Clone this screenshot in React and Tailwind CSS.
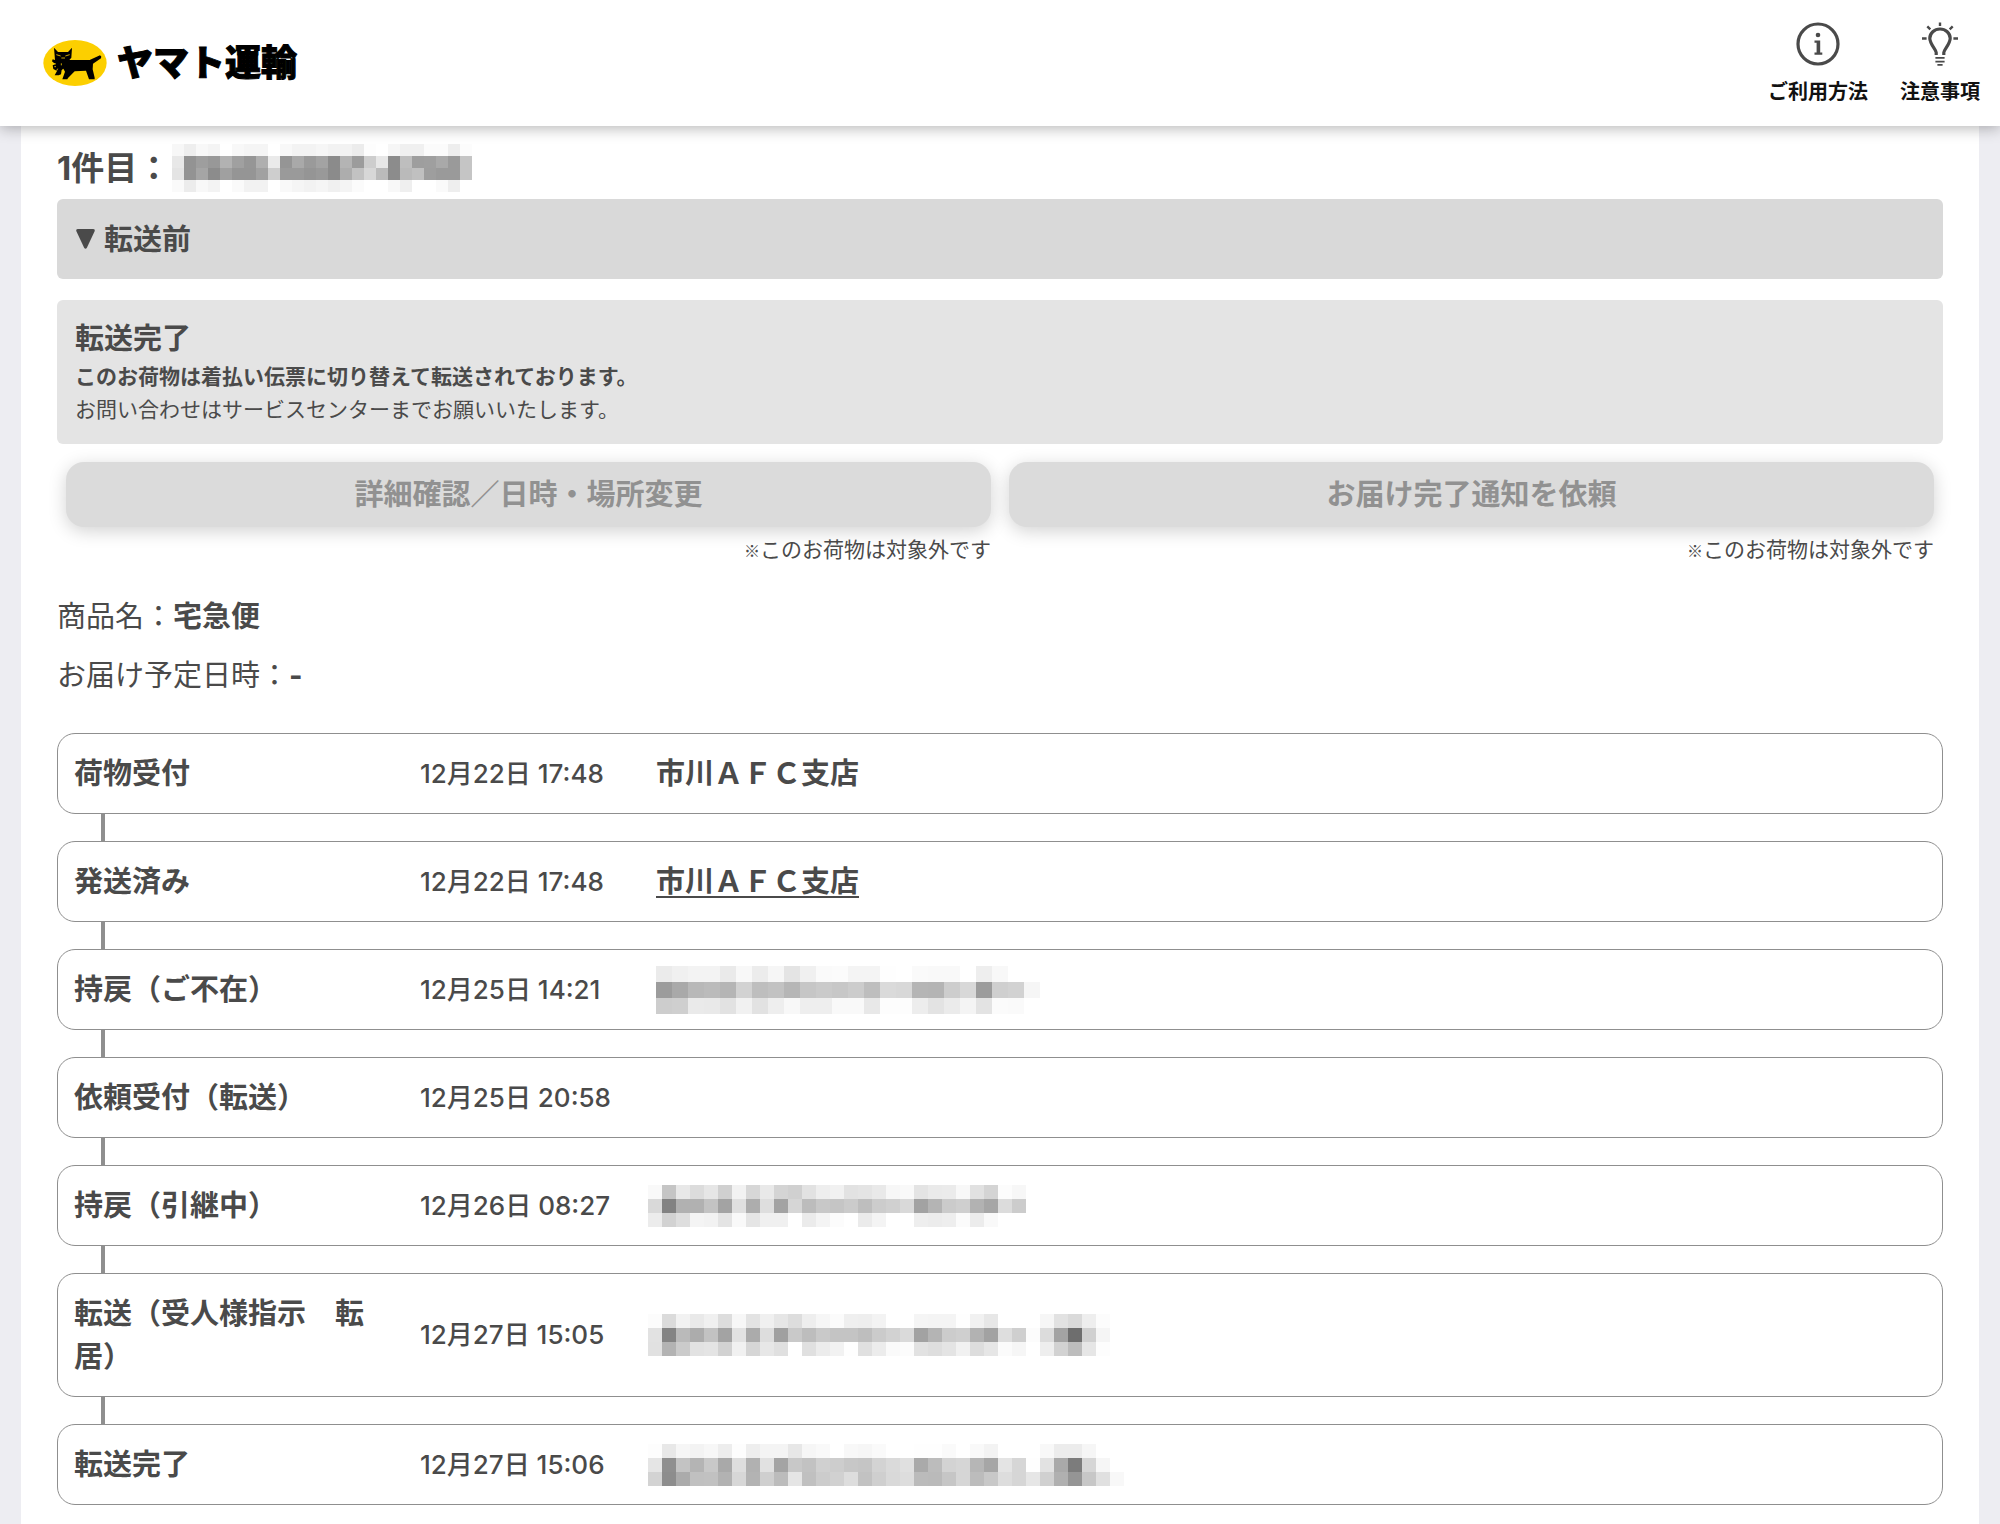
const navLinks = [
  { href: '#howto', label: 'ご利用方法', Icon: InfoIcon },
  { href: '#notes', label: '注意事項', Icon: BulbIcon },
]

const actions = ['詳細確認／日時・場所変更', 'お届け完了通知を依頼']

// Masked values: one string per row of blocks, two hex digits of grey per block
const slipMask = [
  'f7eef8f4fff8f5f5fff8f3f3f6f2f2ecfdfff6f0f0fbfbeefc',
  'e8939e98b2a096afea95a99aa38bb49ccde78cbe9e9fa99ac5',
  'e493a58ca09595a1ce9a9a95998badc2d7bb8cbac09e9a9ac5',
  'faecf8f3fffaf2f2fff9f5f2f5f0f4fbfffff8effffffaeeff',
]

const events = [
  { status: '荷物受付', date: '12月22日 17:48', place: '市川ＡＦＣ支店' },
  { status: '発送済み', date: '12月22日 17:48', place: '市川ＡＦＣ支店', href: '#office' },
  {
    status: '持戻（ご不在）',
    date: '12月25日 14:21',
    block: 16,
    indent: true,
    mask: [
      'ebf0f3f3eaf8ecf6e4f0fafbf4f4fefffaf9f9ffeef8ffff',
      '9ca9b8bbb5d2bec2b6c6cac7ccbedad8b5b4cdd89ccfd2f6',
      'cdcfeae9e2f1e2eef8eeeef9f9e8fdfdede3ebf4e3fbfaff',
    ],
  },
  { status: '依頼受付（転送）', date: '12月25日 20:58' },
  {
    status: '持戻（引継中）',
    date: '12月26日 08:27',
    block: 14,
    mask: [
      'f9c5e8dce6d0f2d7e9d4d0e2eef1e2e4e9f7f9e4eaebf8e1d4fcf7',
      'd982b1b1c3a3e0addea3d6bcc8c5cbbeccd0d9a2b4cbcfb2a6dccc',
      'ecd2def4f2e4f9e5f0f0ffebf4fcffebf4ffffeeeceefbecf9ffff',
    ],
  },
  {
    status: '転送（受人様指示　転居）',
    date: '12月27日 15:05',
    block: 14,
    mask: [
      'fcdbf2e9f0ddf7e3f0e6ddeef6fbefeef3fffff5f4f4fef1e7fffffff6e2daeefc',
      'e284baacc2a3e2abdda0c9bdc9c4c4becbd2daa2b4cccfb2a2decffcdca36ed0f5',
      'e1b3cbe2e4d2f1d6e7e0ffe0ecf2fee0ecfafce2dee4f1dde6fbf6ffeed2bde6fd',
    ],
  },
  {
    status: '転送完了',
    date: '12月27日 15:06',
    block: 14,
    mask: [
      'fde8f6f3f7edfdeef4f4e7f6f9fff8f6fafffffefefafff9f3fffffff8ececf6ffff',
      'e58fc3b4c8a9deb1e1a4c8c2d0cdc7c5d3dae0aabcd3d6b6a6e4d6fee2a97cd6f6ff',
      'd38dabc0c1b2d7b3cfbce5c0ccd1ddc2cfd9ddbbbac6d6bcc8ddd6e6d0b095c7e0f8',
    ],
  },
]

function InfoIcon() {
  return (
    <svg width="44" height="44" viewBox="0 0 44 44" fill="none" aria-hidden="true">
      <circle cx="22" cy="22" r="20" stroke="#4a4a4a" strokeWidth="3.2" />
      <circle cx="22" cy="13" r="2.3" fill="#4a4a4a" />
      <path d="M18.5 18.5h5.7v12h2.1v2.2h-7.8v-2.2h2.1v-9.8h-2.1z" fill="#4a4a4a" />
    </svg>
  )
}

function BulbIcon() {
  return (
    <svg width="44" height="44" viewBox="0 0 44 44" fill="none" stroke="#4a4a4a" aria-hidden="true">
      <path
        d="M18.2 33v-2.6c0-2.4-6.4-8.4-6.4-14.2a10.2 9.2 0 0 1 20.4 0c0 5.8-6.4 11.8-6.4 14.2V33"
        strokeWidth="3.2"
      />
      <path d="M22 .5v3.4M9.3 4.3l3 3M34.7 4.3l-3 3M4 16.5h4.6M35.4 16.5H40" strokeWidth="2.4" />
      <path d="M17.4 35.8h9.2M17.4 39.6h9.2M19.4 42.9h5.2" strokeWidth="1.8" />
    </svg>
  )
}

function CatMark() {
  return (
    <svg width="64" height="46" viewBox="131 117 192 138" aria-hidden="true">
      <ellipse cx="227" cy="186" rx="95" ry="69" fill="#fccf00" />
      <path
        d="M164 140L176 153H206L218 140L216 170L210 177H271L302 163Q308 166 305 172L281 188L280 205L286 230V235H269L260 209L226 211L206 231L204 235H189L197 212L192 203L187 207L185 220L178 223H166L173 210L162 204L160 193L168 190L158 181L160 175L167 177Z"
        fill="#000"
      />
      <path d="M171 161l13 4M211 161l-13 4M186 171h11M163 187l7 2M165 197h5M175 203l-3 6M186 187v6" stroke="#fccf00" strokeWidth="2.4" fill="none" />
    </svg>
  )
}

function Mask({ rows, block }) {
  const cols = rows[0].length / 2
  return (
    <svg
      className="block shrink-0"
      width={cols * block}
      height={rows.length * block}
      shapeRendering="crispEdges"
      aria-hidden="true"
    >
      {rows.map((row, y) =>
        row.match(/../g).map((v, x) => (
          <rect
            key={`${x}-${y}`}
            x={x * block}
            y={y * block}
            width={block}
            height={block}
            fill={`#${v}${v}${v}`}
          />
        ))
      )}
    </svg>
  )
}

function Header() {
  return (
    <header className="relative z-10 flex h-[126px] items-center justify-between bg-white pl-[43px] pr-5 shadow-[0_2px_14px_rgba(0,0,0,0.3)]">
      <a href="#top" className="flex items-center gap-2.5">
        <CatMark />
        <span className="text-[36px] leading-[44px] font-black text-black [-webkit-text-stroke:1px_#000]">ヤマト運輸</span>
      </a>
      <nav className="flex gap-8">
        {navLinks.map(({ href, label, Icon }) => (
          <a key={href} href={href} className="flex flex-col items-center gap-3.5 text-xl leading-6 font-bold text-[#111]">
            <Icon />
            {label}
          </a>
        ))}
      </nav>
    </header>
  )
}

function Event({ event }) {
  const { status, date, place, href, mask, block, indent } = event
  return (
    <li className="group">
      <div className="flex items-center rounded-[18px] border border-[#8f8f8f] px-4 py-[18px]">
        <p className="w-[300px] shrink-0 font-bold">{status}</p>
        <p className="ml-[46px] w-[228px] shrink-0 text-[26px] leading-8 font-medium">{date}</p>
        {place && (
          <p className="pl-2 font-bold">
            {href ? <a href={href} className="underline decoration-2 underline-offset-4">{place}</a> : place}
          </p>
        )}
        {mask && (
          <div className={`flex h-[43px] items-center ${indent ? 'pl-2' : ''}`}>
            <Mask rows={mask} block={block} />
          </div>
        )}
      </div>
      <div className="ml-11 h-[27px] w-1 bg-[#8f8f8f] group-last:hidden" />
    </li>
  )
}

export default function App() {
  return (
    <div className="flex min-h-screen flex-col bg-[#ededf2] font-[Inter,'Noto_Sans_CJK_JP',sans-serif] text-[#4a4a4a]">
      <Header />
      <main className="mx-[21px] grow bg-white px-9 pt-[18px] pb-[18px] text-[29px] leading-[43px]">
        <div className="mb-[7px] flex items-center gap-0.5">
          <h1 className="text-[33px] leading-[48px] font-bold">1件目：</h1>
          <Mask rows={slipMask} block={12} />
        </div>

        <button
          type="button"
          className="mb-[21px] flex h-20 w-full items-center gap-2 rounded-md bg-[#d9d9d9] px-[18px] font-bold"
        >
          <svg width="21" height="20" viewBox="0 0 21 20" fill="#4a4a4a" aria-hidden="true">
            <path d="M3 0h15q2.500 0 1.500 2.400L12 18.400q-1.500 2.600-3 0L1.500 2.400Q.5 0 3 0z" />
          </svg>
          転送前
        </button>

        <section className="mb-[18px] rounded-md bg-[#e4e4e4] p-[18px] text-[21px] leading-[33px]">
          <h2 className="text-[29px] leading-[42px] font-bold">転送完了</h2>
          <p className="font-bold">このお荷物は着払い伝票に切り替えて転送されております。</p>
          <p>お問い合わせはサービスセンターまでお願いいたします。</p>
        </section>

        <div className="grid grid-cols-2 gap-[18px] px-[9px]">
          {actions.map((label) => (
            <div key={label}>
              <button
                type="button"
                disabled
                className="block h-[65px] w-full rounded-[18px] bg-[#dbdbdb] font-bold text-[#919191] shadow-[0_4px_18px_rgba(0,0,0,0.18)]"
              >
                {label}
              </button>
              <p className="mt-1.5 text-right text-[21px] leading-[33px]">
                <span className="font-['Noto_Sans_CJK_JP'] text-base font-medium">※</span>このお荷物は対象外です
              </p>
            </div>
          ))}
        </div>

        <dl className="mt-[29px] mb-9 flex flex-col gap-4">
          <div className="flex">
            <dt>商品名：</dt>
            <dd className="font-bold">宅急便</dd>
          </div>
          <div className="flex">
            <dt>お届け予定日時：</dt>
            <dd className="font-bold">-</dd>
          </div>
        </dl>

        <ol>
          {events.map((event) => (
            <Event key={event.status} event={event} />
          ))}
        </ol>
      </main>
    </div>
  )
}
